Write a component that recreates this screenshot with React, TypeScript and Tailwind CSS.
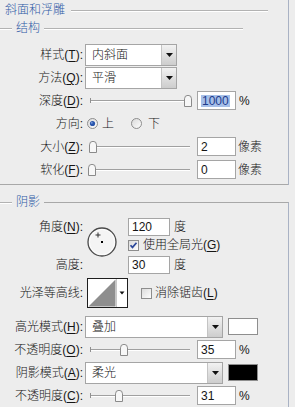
import React from "react";

const BLUE = "text-[#2d5aa6]";

function Etch({ className = "" }: { className?: string }) {
  return <div className={`h-px bg-[#b2b2b2] shadow-[0_1px_0_#ffffff] ${className}`} />;
}

function U({ k }: { k: string }) {
  return <span className="underline underline-offset-[2px]">{k}</span>;
}

function Label({ children }: { children: React.ReactNode }) {
  return <div className="w-[83px] shrink-0 whitespace-nowrap text-right leading-none">{children}</div>;
}

function Row({ children }: { children: React.ReactNode }) {
  return <div className="flex h-[23px] items-center">{children}</div>;
}

function Dropdown({ value, w }: { value: string; w: string }) {
  return (
    <div className={`ml-[2px] flex h-[22px] shrink-0 border border-[#a5a5a5] bg-white ${w}`}>
      <div className="flex-1 pl-[6px] leading-[20px]">{value}</div>
      <div className="flex w-[15px] items-center justify-center border-l border-[#c4c4c4] bg-gradient-to-b from-[#f2f2f2] to-[#cdcdcd]">
        <svg width="7" height="4" viewBox="0 0 7 4">
          <path d="M0 0h7L3.5 4z" fill="#111" />
        </svg>
      </div>
    </div>
  );
}

function Slider({ thumb }: { thumb: string }) {
  return (
    <div className="relative ml-[5px] h-[23px] w-[106px] shrink-0">
      <div className="absolute left-[2px] right-[4px] top-[11px] h-px bg-[#a0a0a0]" />
      <div className="absolute left-[2px] right-[4px] top-[12px] h-px bg-white" />
      <div className="absolute left-[2px] top-[9px] h-[5px] w-px bg-[#909090]" />
      <svg className={`absolute top-[6px] ${thumb}`} width="8" height="12" viewBox="0 0 8 12">
        <path d="M0.5 11.5V3.8a3.5 3.5 0 0 1 7 0v7.7z" fill="#f7f7f7" stroke="#8a8a8a" />
      </svg>
    </div>
  );
}

function Num({ v, sel, w = "w-[39px]", h = "h-[19px]", ml = "ml-[3px]" }: { v: string; sel?: boolean; w?: string; h?: string; ml?: string }) {
  return (
    <div className={`flex shrink-0 items-center border border-[#a5a5a5] bg-white pl-[3px] leading-none ${w} ${h} ${ml}`}>
      {sel ? <span className="bg-[#a6bfe8] px-px text-[#1c3b8c]">{v}</span> : <span>{v}</span>}
    </div>
  );
}

function Radio({ on }: { on?: boolean }) {
  return (
    <svg width="11" height="11" viewBox="0 0 11 11" className="shrink-0">
      <defs>
        <linearGradient id="rg" x1="0" y1="0" x2="1" y2="1">
          <stop offset="0" stopColor="#d8d8d8" />
          <stop offset="1" stopColor="#ffffff" />
        </linearGradient>
      </defs>
      <circle cx="5.5" cy="5.5" r="5" fill="url(#rg)" stroke="#8d8d8d" />
      {on && <circle cx="5.5" cy="5.5" r="2.6" fill="#2a56ad" />}
      {on && <circle cx="4.8" cy="4.8" r="0.9" fill="#7fa2e0" />}
    </svg>
  );
}

function Check({ on }: { on?: boolean }) {
  return (
    <svg width="11" height="11" viewBox="0 0 11 11" className="shrink-0">
      <defs>
        <linearGradient id="cg" x1="0" y1="0" x2="1" y2="1">
          <stop offset="0" stopColor="#dadada" />
          <stop offset="1" stopColor="#ffffff" />
        </linearGradient>
      </defs>
      <rect x="0.5" y="0.5" width="10" height="10" fill="url(#cg)" stroke="#8d8d8d" />
      {on && <path d="M2.5 5.2l2 2.2 4-4.6" fill="none" stroke="#2b479a" strokeWidth="1.7" />}
    </svg>
  );
}

export default function App() {
  return (
    <div className="h-[407px] w-[295px] overflow-hidden bg-[#ededed] font-['Liberation_Sans','Noto_Sans_CJK_SC',sans-serif] text-[12px] font-light text-[#151515]">
      {/* Section 1 */}
      <div className="w-[289px] border-r border-[#a9b2c4]">
        <div className="flex h-[20px] items-center">
          <span className={`pl-[5px] pr-[6px] leading-none ${BLUE}`}>斜面和浮雕</span>
          <Etch className="mr-[20px] flex-1" />
        </div>
        <div className="flex h-[16px] items-center">
          <Etch className="w-[12px]" />
          <span className={`px-[4px] leading-none ${BLUE}`}>结构</span>
          <Etch className="mr-[45px] flex-1" />
        </div>
        <div className="mt-[7px] border-b border-[#a8a8a8] pb-[3px]">
          <Row>
            <Label>样式(<U k="T" />):</Label>
            <Dropdown value="内斜面" w="w-[92px]" />
          </Row>
          <Row>
            <Label>方法(<U k="Q" />):</Label>
            <Dropdown value="平滑" w="w-[92px]" />
          </Row>
          <Row>
            <Label>深度(<U k="D" />):</Label>
            <Slider thumb="left-[96px]" />
            <Num v="1000" sel />
            <span className="ml-[3px] leading-none">%</span>
          </Row>
          <Row>
            <Label>方向:</Label>
            <div className="ml-[4px] flex items-center">
              <Radio on />
              <span className="ml-[4px] leading-none">上</span>
              <div className="ml-[17px]"><Radio /></div>
              <span className="ml-[6px] leading-none">下</span>
            </div>
          </Row>
          <Row>
            <Label>大小(<U k="Z" />):</Label>
            <Slider thumb="left-[1px]" />
            <Num v="2" />
            <span className="ml-[2px] leading-none">像素</span>
          </Row>
          <Row>
            <Label>软化(<U k="F" />):</Label>
            <Slider thumb="left-[0px]" />
            <Num v="0" />
            <span className="ml-[2px] leading-none">像素</span>
          </Row>
        </div>
      </div>

      <div className="h-[9px]" />

      {/* Section 2 */}
      <div className="flex h-[16px] w-[289px] items-center">
        <Etch className="w-[12px]" />
        <span className={`px-[4px] leading-none ${BLUE}`}>阴影</span>
        <div className="h-[8px] flex-1 self-end border-r border-t border-r-[#a9b2c4] border-t-[#a8a8a8]" />
      </div>
      <div className="h-[391px] w-[289px] border-r border-[#a9b2c4] pt-[8px]">
        {/* angle block */}
        <div className="flex h-[56px]">
          <div className="flex w-[83px] shrink-0 flex-col justify-between">
            <div className="flex h-[18px] items-center justify-end leading-none">角度(<U k="N" />):</div>
            <div className="flex h-[18px] items-center justify-end leading-none">高度:</div>
          </div>
          <div className="ml-[4px] mt-[9px] shrink-0">
            <svg width="30" height="30" viewBox="0 0 30 30">
              <circle cx="15" cy="15" r="14" fill="#f4f4f4" stroke="#4a4a4a" strokeWidth="1.3" />
              <circle cx="15" cy="15" r="12.6" fill="none" stroke="#ffffff" strokeWidth="0.8" />
              <rect x="14" y="14" width="2" height="2" fill="#000" />
              <path d="M11 5.5v5M8.5 8h5" stroke="#333" strokeWidth="1" />
            </svg>
          </div>
          <div className="ml-[11px] flex flex-col">
            <div className="flex h-[18px] items-center">
              <Num v="120" w="w-[42px]" h="h-[18px]" ml="ml-0" />
              <span className="ml-[4px] leading-none">度</span>
            </div>
            <div className="mt-[2px] flex h-[14px] items-center">
              <Check on />
              <span className="ml-[4px] leading-none">使用全局光(<U k="G" />)</span>
            </div>
            <div className="mt-[4px] flex h-[18px] items-center">
              <Num v="30" w="w-[42px]" h="h-[18px]" ml="ml-0" />
              <span className="ml-[4px] leading-none">度</span>
            </div>
          </div>
        </div>

        {/* contour */}
        <div className="mt-[4px] flex h-[30px] items-center">
          <Label>光泽等高线:</Label>
          <svg className="ml-[4px] shrink-0" width="41" height="30" viewBox="0 0 41 30">
            <rect x="0.5" y="0.5" width="40" height="29" fill="#ffffff" stroke="#1e1e1e" />
            <path d="M1.5 28.5L28.5 1.5V28.5Z" fill="#8e8e8e" />
            <path d="M29.5 1v28" stroke="#c8c8c8" />
            <path d="M32.5 13.5h5l-2.5 3z" fill="#111" />
          </svg>
          <div className="ml-[13px]"><Check /></div>
          <span className="ml-[3px] leading-none">消除锯齿(<U k="L" />)</span>
        </div>

        <div className="mt-[7px]">
          <Row>
            <Label>高光模式(<U k="H" />):</Label>
            <Dropdown value="叠加" w="w-[138px]" />
            <div className="ml-[5px] h-[17px] w-[30px] border border-[#8e8e8e] bg-white" />
          </Row>
          <Row>
            <Label>不透明度(<U k="O" />):</Label>
            <Slider thumb="left-[32px]" />
            <Num v="35" />
            <span className="ml-[3px] leading-none">%</span>
          </Row>
          <Row>
            <Label>阴影模式(<U k="A" />):</Label>
            <Dropdown value="柔光" w="w-[138px]" />
            <div className="ml-[5px] h-[17px] w-[30px] border border-[#8e8e8e] bg-black" />
          </Row>
          <Row>
            <Label>不透明度(<U k="C" />):</Label>
            <Slider thumb="left-[27px]" />
            <Num v="31" />
            <span className="ml-[3px] leading-none">%</span>
          </Row>
        </div>
      </div>
    </div>
  );
}
